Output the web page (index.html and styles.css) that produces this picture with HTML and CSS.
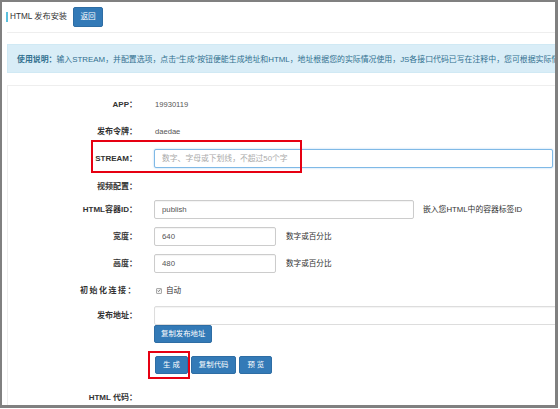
FILE: index.html
```html
<!DOCTYPE html>
<html lang="zh">
<head>
<meta charset="utf-8">
<title>HTML 发布安装</title>
<link rel="stylesheet" href="styles.css">
</head>
<body>
<div class="frame">
  <div class="wrap">
    <div class="header">
      <span class="title">HTML 发布安装</span>
      <span class="btn btn-back">返回</span>
    </div>
    <div class="alert"><b>使用说明：</b>输入STREAM，并配置选项，点击“生成”按钮便能生成地址和HTML，地址根据您的实际情况使用，JS各接口代码已写在注释中，您可根据实际情况修改代码。</div>
    <div class="panel">
      <div class="row">
        <div class="label">APP：</div>
        <div class="ctrl text">19930119</div>
      </div>
      <div class="row">
        <div class="label">发布令牌：</div>
        <div class="ctrl text">daedae</div>
      </div>
      <div class="row row-stream">
        <div class="label">STREAM：</div>
        <div class="ctrl"><input class="input input-focus w-stream" placeholder="数字、字母或下划线，不超过50个字"></div>
      </div>
      <div class="row row-section">
        <div class="label">视频配置：</div>
      </div>
      <div class="row">
        <div class="label">HTML容器ID：</div>
        <div class="ctrl"><input class="input w-id" value="publish"></div>
        <span class="help help-id">嵌入您HTML中的容器标签ID</span>
      </div>
      <div class="row">
        <div class="label">宽度：</div>
        <div class="ctrl"><input class="input w-num" value="640"></div>
        <span class="help">数字或百分比</span>
      </div>
      <div class="row">
        <div class="label">高度：</div>
        <div class="ctrl"><input class="input w-num" value="480"></div>
        <span class="help">数字或百分比</span>
      </div>
      <div class="row row-init">
        <div class="label label-wide">初始化连接：</div>
        <div class="ctrl check">
          <span class="chk"><svg viewBox="0 0 8 8" width="6" height="6"><path d="M1.3 4.2 L3.2 6 L6.8 1.8" fill="none" stroke="#555" stroke-width="1.4"/></svg></span>
          <span class="chk-label">自动</span>
        </div>
      </div>
      <div class="row row-addr">
        <div class="label">发布地址：</div>
        <div class="ctrl stack">
          <input class="input w-addr">
          <span class="btn btn-copy">复制发布地址</span>
        </div>
      </div>
      <div class="row row-btns">
        <div class="label"></div>
        <div class="ctrl btns">
          <span class="btn">生 成</span>
          <span class="btn">复制代码</span>
          <span class="btn btn-narrow">预 览</span>
        </div>
      </div>
      <div class="row">
        <div class="label">HTML 代码：</div>
      </div>
    </div>
  </div>
  <div class="mark mark-stream"></div>
  <div class="mark mark-gen"></div>
</div>
</body>
</html>
```
FILE: styles.css
```css
* { box-sizing: border-box; }
html, body { margin: 0; padding: 0; background: #fff; }
body {
  font-family: "Liberation Sans", "Noto Sans CJK SC", sans-serif;
  color: #333;
}
.frame {
  position: relative;
  width: 558px;
  height: 408px;
  border-style: solid;
  border-color: #808080;
  border-width: 2px 3px 3px 2px;
  overflow: hidden;
  background: #fff;
}
.wrap {
  padding-left: 5px;
  width: 820px;
}
.header {
  height: 31px;
  display: flex;
  align-items: center;
  border-bottom: 1px solid #eee;
}
.title {
  margin-left: -1px;
  border-left: 2px solid #5bc0de;
  padding-left: 2px;
  font-size: 8.2px;
  line-height: 10px;
  color: #333;
}
.btn {
  display: inline-flex;
  align-items: center;
  justify-content: center;
  height: 18px;
  padding: 0 7px;
  background: #337ab7;
  border: 1px solid #2e6da4;
  border-radius: 2px;
  color: #fff;
  font-size: 7.4px;
  line-height: 10px;
  white-space: nowrap;
}
.btn-back {
  margin-left: 6px;
  height: 20px;
  width: 30px;
  padding: 0;
  font-size: 7.6px;
}
.alert {
  margin-top: 11px;
  height: 29px;
  display: flex;
  align-items: center;
  padding-left: 9px;
  background: #d9edf7;
  border: 1px solid #d0e9f4;
  color: #31708f;
  font-size: 7.9px;
  white-space: nowrap;
}
.panel {
  margin-top: 12px;
  border-top: 1px solid #eee;
  border-left: 1px solid #eee;
  padding-top: 9px;
  height: 400px;
}
.row {
  display: flex;
  align-items: center;
  height: 19px;
  margin-bottom: 8px;
}
.row-stream { margin-bottom: 9px; }
.row-section { margin-bottom: 4px; }
.row-init { margin-bottom: 6px; }
.row-addr {
  height: 37px;
  align-items: flex-start;
  margin-bottom: 13px;
}
.row-addr .label { line-height: 19px; }
.row-btns { height: 18px; margin-bottom: 14px; }
.label {
  flex: none;
  width: 129px;
  text-align: right;
  font-weight: bold;
  font-size: 8px;
  line-height: 10px;
  color: #333;
  white-space: nowrap;
}
.label-wide { letter-spacing: 1.5px; margin-right: -1.5px; }
.ctrl {
  flex: none;
  margin-left: 17px;
}
.label-wide + .ctrl { margin-left: 18.5px; }
.text {
  padding-left: 1px;
  font-size: 7.6px;
  line-height: 10px;
  color: #555;
}
.input {
  display: block;
  height: 19px;
  border: 1px solid #ccc;
  border-radius: 2px;
  padding: 0 7px;
  margin: 0;
  font-family: "Liberation Sans", "Noto Sans CJK SC", sans-serif;
  font-size: 7.8px;
  color: #555;
  background: #fff;
  outline: none;
  box-shadow: inset 0 1px 1px rgba(0,0,0,0.05);
}
.input::placeholder { color: #aaa; }
.input-focus {
  border-color: #7fb9e6;
  box-shadow: 0 0 2px rgba(102,175,233,0.6);
}
.w-stream { width: 399px; }
.w-id { width: 260px; }
.w-num { width: 122px; }
.w-addr { width: 420px; border-color: #ddd; }
.help {
  margin-left: 10px;
  font-size: 7.6px;
  line-height: 10px;
  color: #333;
}
.help-id { margin-left: 9px; font-size: 7.8px; }
.check {
  display: flex;
  align-items: center;
  padding-left: 2px;
}
.chk {
  display: inline-flex;
  align-items: center;
  justify-content: center;
  width: 6px;
  height: 6px;
  border: 1px solid #aaa;
  border-radius: 1px;
  background: #f4f4f4;
}
.chk svg { display: block; width: 5px; height: 5px; }
.chk-label {
  margin-left: 4px;
  font-size: 7.6px;
  line-height: 10px;
  color: #333;
}
.stack {
  display: flex;
  flex-direction: column;
  align-items: flex-start;
}
.btn-copy { height: 18px; padding: 0 6px; }
.btns {
  display: flex;
  gap: 3px;
  margin-left: 18px;
}
.mark {
  position: absolute;
  border: 2px solid #e60012;
}
.mark-stream {
  left: 89px;
  top: 138px;
  width: 211px;
  height: 33px;
}
.mark-gen {
  left: 146px;
  top: 349px;
  width: 42px;
  height: 28px;
}
```
